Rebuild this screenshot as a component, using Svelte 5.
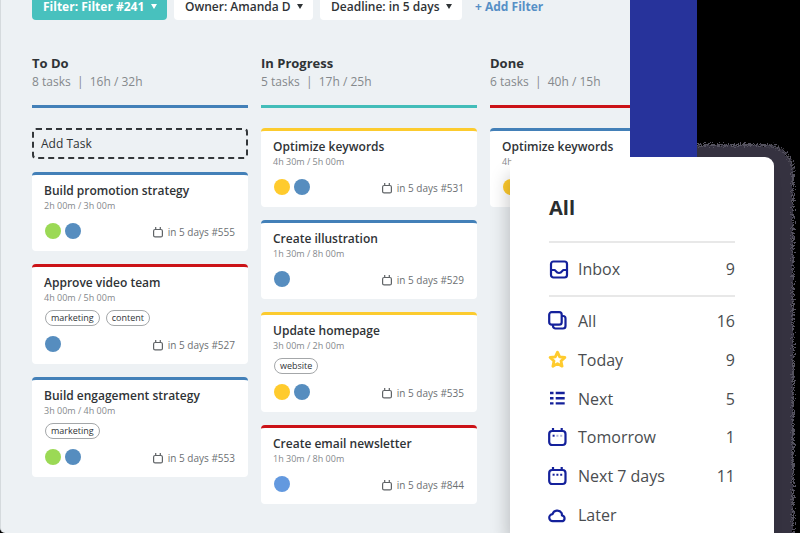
<script>
  const filters = [
    { id: 'saved', label: 'Saved filter', value: 'Filter: Filter #241', active: true },
    { id: 'owner', label: 'Owner', value: 'Owner: Amanda D' },
    { id: 'deadline', label: 'Deadline', value: 'Deadline: in 5 days' }
  ];

  const columns = [
    {
      title: 'To Do', tasks: 8, hours: '16h / 32h', color: 'blue', canAdd: true,
      cards: [
        { title: 'Build promotion strategy', time: '2h 00m / 3h 00m', color: 'blue', tags: [], people: ['green', 'blue'], id: 555 },
        { title: 'Approve video team', time: '4h 00m / 5h 00m', color: 'red', tags: ['marketing', 'content'], people: ['blue'], id: 527 },
        { title: 'Build engagement strategy', time: '3h 00m / 4h 00m', color: 'blue', tags: ['marketing'], people: ['green', 'blue'], id: 553 }
      ]
    },
    {
      title: 'In Progress', tasks: 5, hours: '17h / 25h', color: 'teal',
      cards: [
        { title: 'Optimize keywords', time: '4h 30m / 5h 00m', color: 'yellow', tags: [], people: ['yellow', 'blue'], id: 531 },
        { title: 'Create illustration', time: '1h 30m / 8h 00m', color: 'blue', tags: [], people: ['blue'], id: 529 },
        { title: 'Update homepage', time: '3h 00m / 2h 00m', color: 'yellow', tags: ['website'], people: ['yellow', 'blue'], id: 535 },
        { title: 'Create email newsletter', time: '1h 30m / 8h 00m', color: 'red', tags: [], people: ['sky'], id: 844 }
      ]
    },
    {
      title: 'Done', tasks: 6, hours: '40h / 15h', color: 'red',
      cards: [
        { title: 'Optimize keywords', time: '4h 30m / 5h 00m', color: 'blue', tags: [], people: ['yellow', 'blue'], id: 531 }
      ]
    }
  ];

  const views = [
    { name: 'All', count: 16, icon: 'stack' },
    { name: 'Today', count: 9, icon: 'star' },
    { name: 'Next', count: 5, icon: 'list' },
    { name: 'Tomorrow', count: 1, icon: 'tomorrow' },
    { name: 'Next 7 days', count: 11, icon: 'week' },
    { name: 'Later', icon: 'cloud' }
  ];
</script>

{#snippet icon(name)}
  <svg class="icon {name}" viewBox="0 0 20 20" aria-hidden="true">
    {#if name === 'inbox'}
      <rect x="2" y="2.500" width="16" height="16" rx="2.500" />
      <path d="M2 11h3.500c1 0 1.600 3 4.500 3s3.500-3 4.500-3H18" />
    {:else if name === 'stack'}
      <rect x="1.200" y="1.200" width="12.500" height="12.500" rx="2.500" />
      <path d="M13.700 5h1.300a2.500 2.500 0 0 1 2.500 2.500v7.500a2.500 2.500 0 0 1-2.500 2.500H7.500A2.500 2.500 0 0 1 5 15v-1.300" />
    {:else if name === 'star'}
      <path d="M9.500 2.200l2.200 4.700 5.200.6-3.900 3.500 1.100 5.200-4.600-2.600-4.600 2.600 1.100-5.200-3.900-3.500 5.200-.6z" />
    {:else if name === 'list'}
      <path d="M2 4h3.500M7.700 4h9M2 9.200h3.500M7.700 9.200h9M2 14.400h3.500M7.700 14.400h9" />
    {:else if name === 'cloud'}
      <path d="M5 16.200a3.500 3.500 0 0 1-.5-7A5 5 0 0 1 13.600 8c.4.900.4 1.500.3 2.300a3.100 3.100 0 0 1 .8 5.900z" />
    {:else}
      <rect x="1.200" y="4" width="16.300" height="14" rx="3" />
      <path d="M5 1v3M13.700 1v3" />
      <path class="dots" d="M4.600 8.700h2" />
      <path class="dots" class:faint={name === 'tomorrow'} d="M8.400 8.700h2M12.200 8.700h2" />
    {/if}
  </svg>
{/snippet}

<div class="stage">
  <main class="board">
    <div class="filters">
      {#each filters as filter (filter.id)}
        <div class="chip" class:active={filter.active}>
          <select id={filter.id} aria-label={filter.label}>
            <option>{filter.value}</option>
          </select>
          <svg class="caret" viewBox="0 0 6 5" aria-hidden="true"><path d="M0 0h6L3 5z" /></svg>
        </div>
      {/each}
      <button class="add-filter" type="button">+ Add Filter</button>
    </div>

    <div class="columns">
      {#each columns as column (column.title)}
        <section class="column">
          <header class={column.color}>
            <h2>{column.title}</h2>
            <p>{column.tasks} tasks &nbsp;|&nbsp; {column.hours}</p>
          </header>

          {#if column.canAdd}
            <button class="add-task" type="button">Add Task</button>
          {/if}

          {#each column.cards as card (card.title)}
            <article class="card {card.color}">
              <h3>{card.title}</h3>
              <p class="time">{card.time}</p>
              {#if card.tags.length}
                <div class="tags">
                  {#each card.tags as tag (tag)}
                    <span class="tag">{tag}</span>
                  {/each}
                </div>
              {/if}
              <div class="card-foot">
                {#each card.people as person (person)}
                  <span class="avatar {person}"></span>
                {/each}
                <span class="due">
                  <svg viewBox="0 0 10 11" aria-hidden="true">
                    <rect x="0.600" y="2.500" width="8.800" height="7.400" rx="1.500" />
                    <path d="M2.700 0v2.500M7.300 0v2.500" />
                  </svg>
                  in 5 days #{card.id}
                </span>
              </div>
            </article>
          {/each}
        </section>
      {/each}
    </div>
  </main>

  <div class="band"></div>

  <div class="night">
    <svg class="defs" aria-hidden="true">
      <filter id="grain" x="-10%" y="-10%" width="120%" height="120%">
        <feTurbulence type="fractalNoise" baseFrequency="0.6" numOctaves="2" seed="4" />
        <feDisplacementMap in="SourceGraphic" scale="9" xChannelSelector="R" yChannelSelector="G" />
      </filter>
    </svg>
    <div class="halo"></div>
  </div>

  <nav class="panel">
    <h1>All</h1>
    <a class="inbox-row" href="#inbox">
      {@render icon('inbox')}
      <span>Inbox</span>
      <span class="count">9</span>
    </a>
    <ul>
      {#each views as view (view.name)}
        <li>
          <a href="#{view.icon}">
            {@render icon(view.icon)}
            <span>{view.name}</span>
            {#if view.count}<span class="count">{view.count}</span>{/if}
          </a>
        </li>
      {/each}
    </ul>
  </nav>
</div>

<style>
  :global(body) {
    background: #000;
  }

  .stage {
    position: relative;
    display: grid;
    grid-template-columns: minmax(0, 1fr) 67px 103px;
    height: 100vh;
    overflow: hidden;
    font-family: 'Open Sans', 'Noto Sans', sans-serif;
    color: #2f3336;
  }

  h1, h2, h3, p, ul {
    margin: 0;
    padding: 0;
  }

  button, select {
    font: inherit;
    color: inherit;
    border: 0;
    background: none;
    cursor: pointer;
  }

  .board {
    box-sizing: border-box;
    overflow: hidden;
    padding-left: 31px;
    background: #edf1f4;
    border-left: 1px solid #d5dadd;
    border-bottom-left-radius: 5px;
  }

  /* filter bar, scrolled partly out of view */
  .filters {
    display: flex;
    gap: 7px;
    height: 28px;
    margin-top: -8px;
    font-size: 12px;
    font-weight: 600;
  }

  .chip {
    position: relative;
    flex: none;
    background: #fff;
    border-radius: 4px;
  }

  .chip.active {
    background: #48c1be;
    color: #fff;
    font-weight: 700;
  }

  .chip select {
    appearance: none;
    height: 28px;
    padding: 0 22px 0 11px;
  }

  .caret {
    position: absolute;
    right: 10px;
    top: 12px;
    width: 6px;
    height: 5px;
    fill: currentColor;
    pointer-events: none;
  }

  .add-filter {
    padding: 0 6px;
    color: #568fc6;
    font-weight: 700;
  }

  .columns {
    display: flex;
    gap: 13px;
    padding-top: 34px;
  }

  .column {
    flex: 0 0 216px;
    display: flex;
    flex-direction: column;
    gap: 13px;
  }

  header {
    height: 51px;
    margin-bottom: 7px;
    border-bottom: 3px solid;
  }

  h2 {
    font-size: 13px;
    line-height: 18px;
    font-weight: 700;
    color: #2f3336;
  }

  header p {
    font-size: 12px;
    line-height: 20px;
    color: #85898c;
  }

  header.blue, .card.blue { border-color: #4380b8; }
  header.teal { border-color: #43bdb9; }
  header.red, .card.red { border-color: #cb1217; }
  .card.yellow { border-color: #fccb2e; }

  .add-task {
    height: 31px;
    padding: 0 7px;
    border: 2px dashed #33373a;
    border-radius: 4px;
    font-size: 12px;
    text-align: left;
  }

  .card {
    padding: 8px 12px 12px;
    background: #fff;
    border-top: 3px solid;
    border-radius: 4px;
  }

  h3 {
    font-size: 12px;
    line-height: 16px;
    font-weight: 600;
  }

  .time {
    font-size: 9px;
    line-height: 14px;
    color: #85898c;
  }

  .tags {
    display: flex;
    gap: 6px;
    margin-top: 5px;
    padding-left: 1px;
  }

  .tag {
    box-sizing: border-box;
    height: 16px;
    padding: 0 5px;
    border: 1px solid #a4a7a9;
    border-radius: 8px;
    font-size: 9px;
    line-height: 13px;
  }

  .card-foot {
    display: flex;
    align-items: flex-end;
    gap: 4px;
    margin-top: 10px;
    padding: 0 1px;
  }

  .avatar {
    width: 16px;
    height: 16px;
    border-radius: 50%;
  }

  .avatar.green { background: #9bd955; }
  .avatar.blue { background: #568dbf; }
  .avatar.sky { background: #6399df; }
  .avatar.yellow { background: #ffcb2d; }

  .due {
    display: flex;
    align-items: center;
    gap: 5px;
    margin-left: auto;
    font-size: 10px;
    line-height: 14px;
    color: #6c7073;
  }

  .due svg {
    width: 10px;
    height: 11px;
    fill: none;
    stroke: #5f6366;
    stroke-width: 1.2;
  }

  .band {
    background: #27339b;
  }

  .night {
    position: relative;
    overflow: hidden;
    background: #000;
  }

  .defs {
    position: absolute;
    width: 0;
    height: 0;
  }

  .halo {
    position: absolute;
    inset: 144px 6px -40px -40px;
    background: #35333f;
    border: 2px solid #54525f;
    border-radius: 28px;
    filter: url(#grain);
  }

  .panel {
    position: absolute;
    top: 157px;
    right: 26px;
    bottom: 0;
    box-sizing: border-box;
    width: 264px;
    padding: 37px 39px 0;
    background: #fff;
    border-radius: 8px 9px 0 0;
    box-shadow: -6px 14px 18px -4px rgba(0, 0, 0, 0.22);
    font-size: 16px;
    color: #4a4d50;
  }

  h1 {
    padding-bottom: 19px;
    font-size: 20px;
    line-height: 28px;
    font-weight: 700;
    color: #2a2d2f;
  }

  .panel a {
    display: flex;
    align-items: center;
    gap: 9px;
    height: 100%;
    color: inherit;
    text-decoration: none;
  }

  .panel .inbox-row {
    height: 52px;
    margin-bottom: 5px;
    border-top: 2px solid #e8e8e8;
    border-bottom: 2px solid #e8e8e8;
  }

  ul {
    display: grid;
    grid-template-rows: repeat(6, 1fr);
    height: 232px;
    list-style: none;
  }

  ul .icon {
    margin: 0 1px 0 -1px;
  }

  .count {
    margin-left: auto;
  }

  .icon {
    width: 20px;
    height: 20px;
    fill: none;
    stroke: #14219b;
    stroke-width: 2.2;
    stroke-linejoin: round;
  }

  .icon.star {
    stroke: #ffcb2d;
    stroke-width: 2.8;
  }

  .icon.list {
    stroke-width: 2.4;
  }

  .dots {
    stroke-width: 2;
  }

  .dots.faint {
    opacity: 0.35;
  }
</style>
